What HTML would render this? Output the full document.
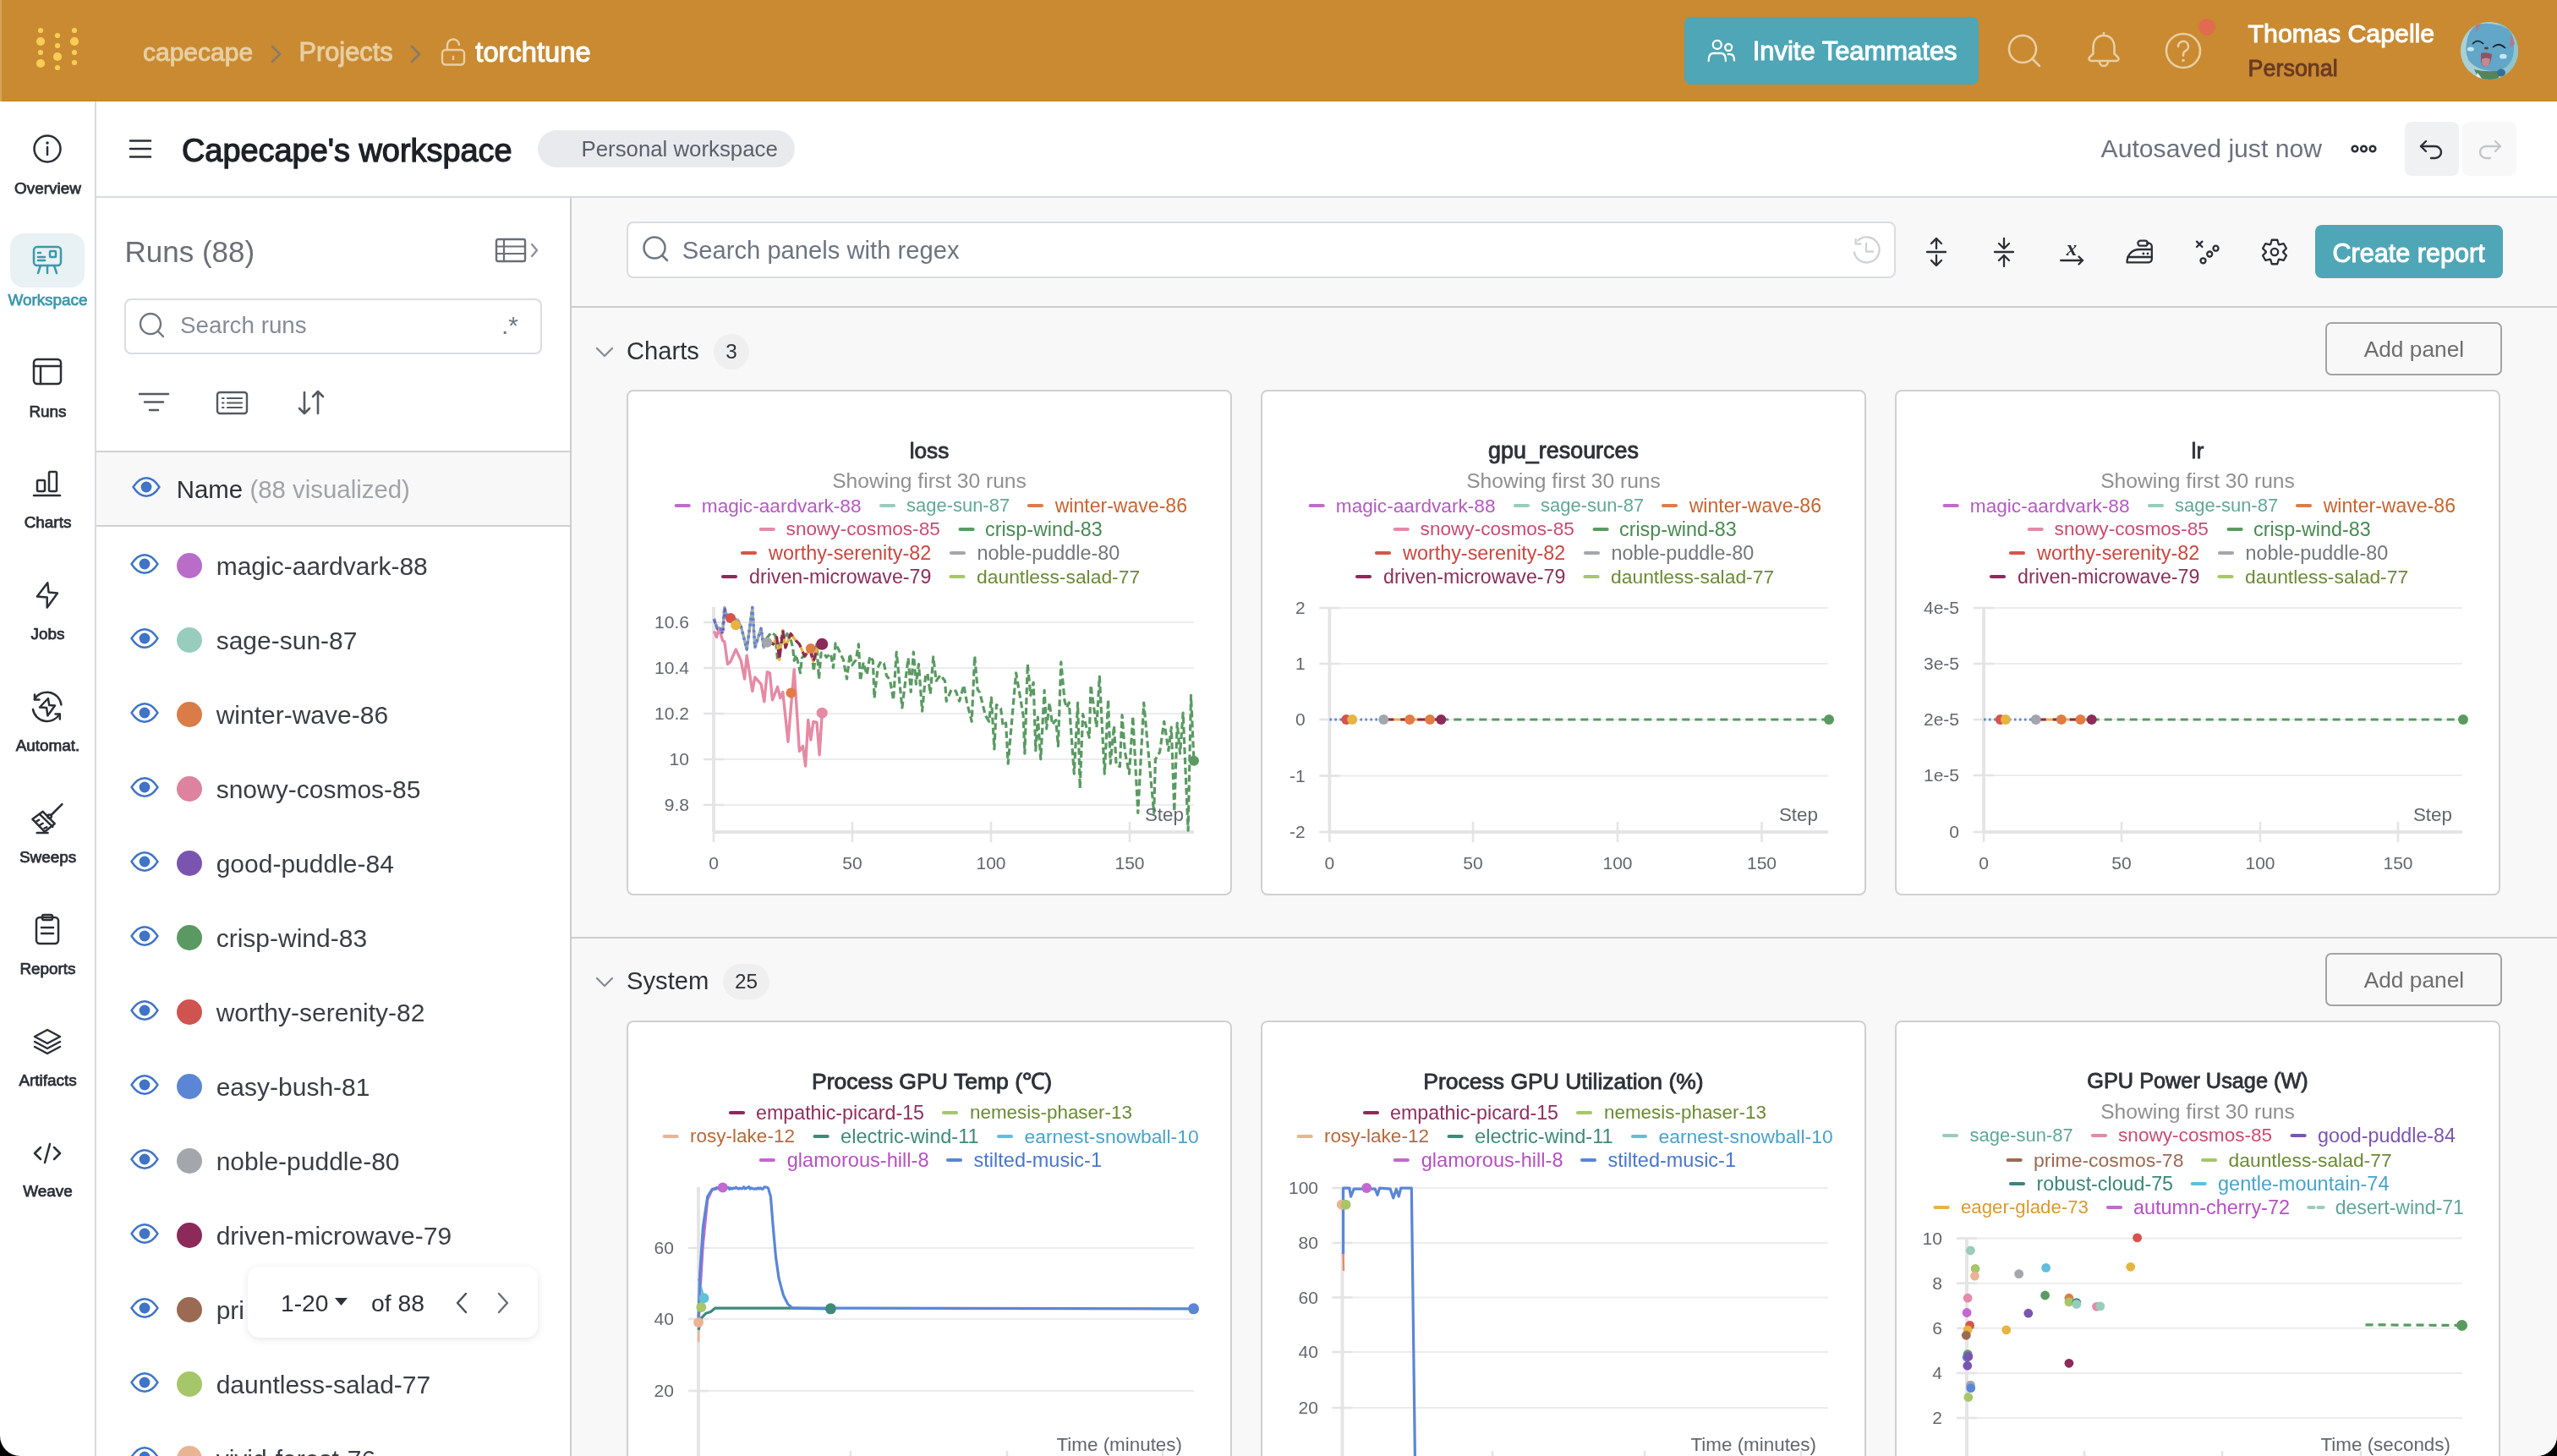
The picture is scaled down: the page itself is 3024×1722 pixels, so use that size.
<!DOCTYPE html><html><head><meta charset="utf-8"><style>
html,body{margin:0;padding:0;background:#000;overflow:hidden;}
#app{will-change:transform;position:relative;width:3024px;height:1722px;overflow:hidden;background:#fff;border-radius:0 0 24px 24px;font-family:"Liberation Sans", sans-serif;}
.t{position:absolute;white-space:nowrap;line-height:1;}
.b{position:absolute;box-sizing:border-box;}
</style></head><body><div id="app">
<div class="b" style="left:0px;top:0px;width:3024px;height:120px;background:#c98a32;"></div>
<div class="b" style="left:0px;top:118.5px;width:3024px;height:1.5px;background:#c47f26;"></div>
<div class="b" style="left:0px;top:0px;width:2px;height:120px;background:#d5a35e;"></div>
<svg class="b" style="left:0px;top:0px;" width="130" height="120" viewBox="0 0 130 120"><circle cx="48" cy="36" r="3.1" fill="#f7cd55"/><circle cx="48" cy="49" r="5.1" fill="#f7cd55"/><circle cx="48" cy="62" r="3.1" fill="#f7cd55"/><circle cx="48" cy="75" r="5.1" fill="#f7cd55"/><circle cx="68" cy="42" r="3.1" fill="#f7cd55"/><circle cx="68" cy="54" r="3.1" fill="#f7cd55"/><circle cx="68" cy="67" r="5.1" fill="#f7cd55"/><circle cx="68" cy="80" r="3.1" fill="#f7cd55"/><circle cx="88" cy="36" r="3.1" fill="#f7cd55"/><circle cx="88" cy="49" r="5.1" fill="#f7cd55"/><circle cx="88" cy="62" r="3.1" fill="#f7cd55"/><circle cx="88" cy="74" r="3.1" fill="#f7cd55"/></svg>
<div class="t" style="left:169.0px;top:47.1px;font-size:30.00px;color:#e8cfa2;-webkit-text-stroke:0.99px #e8cfa2;">capecape</div>
<div class="t" style="left:353.4px;top:46.7px;font-size:30.80px;color:#e8cfa2;-webkit-text-stroke:1.02px #e8cfa2;">Projects</div>
<div class="t" style="left:562.3px;top:45.6px;font-size:32.70px;color:#ffffff;-webkit-text-stroke:1.08px #ffffff;">torchtune</div>
<svg class="b" style="left:320px;top:53px;" width="14" height="22" viewBox="0 0 14 22"><path d="M2 2 L11 11 L2 20" fill="none" stroke="#8a7a66" stroke-width="2.6" stroke-linecap="round" stroke-linejoin="round"/></svg>
<svg class="b" style="left:485px;top:53px;" width="14" height="22" viewBox="0 0 14 22"><path d="M2 2 L11 11 L2 20" fill="none" stroke="#8a7a66" stroke-width="2.6" stroke-linecap="round" stroke-linejoin="round"/></svg>
<svg class="b" style="left:520px;top:45px;" width="32" height="34" viewBox="0 0 32 34"><rect x="3" y="14" width="26" height="17.5" rx="4" fill="none" stroke="#e8cfa2" stroke-width="2.4"/><path d="M9 14 V9 a7 7 0 0 1 14 -1" fill="none" stroke="#e8cfa2" stroke-width="2.4" stroke-linecap="round"/><path d="M16 21 v5" stroke="#e8cfa2" stroke-width="2.2"/></svg>
<div class="b" style="left:1992px;top:20px;width:348px;height:80px;background:#4ea6b6;border-radius:8px;"></div>
<svg class="b" style="left:2016px;top:42px;" width="40" height="36" viewBox="0 0 40 36"><circle cx="14.8" cy="10.9" r="5" fill="none" stroke="#fff" stroke-width="2.3"/><circle cx="28.2" cy="14" r="4" fill="none" stroke="#fff" stroke-width="2.3"/><path d="M4.7 30 C4.7 23 7 21 10 21 H19.5 C22.5 21 24.9 23 24.9 30" fill="none" stroke="#fff" stroke-width="2.3" stroke-linecap="round"/><path d="M27.5 22.2 H30 C33 22.2 35 24.5 35 29.5" fill="none" stroke="#fff" stroke-width="2.3" stroke-linecap="round"/></svg>
<div class="t" style="left:2072.7px;top:45.7px;font-size:30.95px;color:#ffffff;-webkit-text-stroke:1.02px #ffffff;">Invite Teammates</div>
<svg class="b" style="left:2365px;top:32px;" width="56" height="56" viewBox="0 0 56 56"><circle cx="27" cy="26" r="16" fill="none" stroke="#e9cfa2" stroke-width="2.6"/><path d="M38.5 37.5 L47 46" stroke="#e9cfa2" stroke-width="2.6" stroke-linecap="round"/></svg>
<svg class="b" style="left:2465px;top:35px;" width="46" height="50" viewBox="0 0 46 50"><path d="M23 7 c-8 0 -12.5 6 -12.5 14 v7.5 l-4.2 4.2 c-1.6 1.6 -0.8 4.3 1.5 4.3 h30.4 c2.3 0 3.1 -2.7 1.5 -4.3 l-4.2 -4.2 v-7.5 c0 -8 -4.5 -14 -12.5 -14 Z" fill="none" stroke="#e9cfa2" stroke-width="2.6" stroke-linejoin="round"/><path d="M18 38 a5 5 0 0 0 10 0" fill="none" stroke="#e9cfa2" stroke-width="2.6"/><path d="M23 6 v-2" stroke="#e9cfa2" stroke-width="2.6" stroke-linecap="round"/></svg>
<svg class="b" style="left:2557px;top:35px;" width="50" height="50" viewBox="0 0 50 50"><circle cx="25" cy="25" r="20" fill="none" stroke="#e9cfa2" stroke-width="2.6"/><path d="M19 20 a6 6 0 1 1 8.5 5.3 c-1.8 1 -2.5 2 -2.5 4 v1.5" fill="none" stroke="#e9cfa2" stroke-width="2.6" stroke-linecap="round"/><circle cx="25" cy="36.5" r="1.8" fill="#e9cfa2"/></svg>
<div class="b" style="left:2600px;top:22px;width:20px;height:20px;background:#e06b4e;border-radius:50%;"></div>
<div class="t" style="left:2658.6px;top:25.0px;font-size:30.30px;color:#ffffff;-webkit-text-stroke:1.0px #ffffff;">Thomas Capelle</div>
<div class="t" style="left:2658.6px;top:67.5px;font-size:26.90px;color:#6a3a22;-webkit-text-stroke:0.89px #6a3a22;">Personal</div>
<svg class="b" style="left:2910px;top:26px;" width="68" height="68" viewBox="0 0 68 68"><defs><clipPath id="av"><circle cx="34" cy="34" r="34"/></clipPath></defs><g clip-path="url(#av)"><rect width="68" height="68" fill="#8dbfca"/><path d="M0 0 H68 V68 H0 Z" fill="#a9d0d4"/><path d="M44 0 L68 10 V68 H52 Z" fill="#8ec4cc"/><path d="M-2 50 Q6 62 24 68 H0 Z" fill="#5ea2c6"/><path d="M18 4 Q34 -2 56 8 Q66 18 62 40 Q58 56 40 58 Q20 58 10 46 Q4 36 8 20 Q10 10 18 4 Z" fill="#62a6c8"/><path d="M18 3 L24 2 L19 12 Z" fill="#b07a8a"/><path d="M60 14 L64 26 L58 30 Z" fill="#b07a8a"/><path d="M14 26 Q20 19 27 26" fill="none" stroke="#15222e" stroke-width="1.7"/><path d="M38 30 Q45 23 53 31" fill="none" stroke="#15222e" stroke-width="1.7"/><ellipse cx="30.5" cy="31" rx="2.6" ry="1.4" fill="#5a3a3a"/><ellipse cx="11.8" cy="32" rx="4" ry="2.6" fill="#c4e6f2"/><ellipse cx="50.3" cy="40.7" rx="4.3" ry="2.9" fill="#c4e6f2"/><path d="M24 37 Q30 35 37 38 Q36 50 31 53 Q25 54 24 46 Z" fill="#8a5564"/><path d="M25 44 Q30 41 35 44 Q34 53 30 53 Q25 53 25 46 Z" fill="#c48a92"/><path d="M16 56 Q30 60 48 57 L44 68 H22 Z" fill="#52855a"/><path d="M20 60 L26 68 H17 Z" fill="#e8eef0"/><ellipse cx="48" cy="60" rx="5" ry="4.5" fill="#346f94"/></g></svg>
<div class="b" style="left:112px;top:120px;width:2px;height:1602px;background:#d7dadf;"></div>
<div class="b" style="left:12px;top:276px;width:88px;height:64px;background:#e8f1f3;border-radius:16px;"></div>
<svg class="b" style="left:34px;top:154px;" width="44" height="44" viewBox="0 0 44 44"><circle cx="22" cy="22" r="15.5" fill="none" stroke="#2b2f36" stroke-width="2.5" stroke-linecap="round" stroke-linejoin="round"/><path d="M22 20 v9" fill="none" stroke="#2b2f36" stroke-width="2.5" stroke-linecap="round" stroke-linejoin="round"/><circle cx="22" cy="15" r="1.8" fill="#2b2f36"/></svg>
<svg class="b" style="left:34px;top:286px;" width="44" height="44" viewBox="0 0 44 44"><rect x="6" y="6" width="32" height="22" rx="4" fill="none" stroke="#3c98ab" stroke-width="2.5" stroke-linecap="round" stroke-linejoin="round"/><path d="M11 13 h3 M11 18 h8 M11 22 h8" fill="none" stroke="#3c98ab" stroke-width="2.5" stroke-linecap="round" stroke-linejoin="round"/><rect x="25" y="11" width="7" height="7" rx="1" fill="none" stroke="#3c98ab" stroke-width="2.5" stroke-linecap="round" stroke-linejoin="round"/><path d="M14 28 l-3 9 M22 28 v9 M30 28 l3 9" fill="none" stroke="#3c98ab" stroke-width="2.5" stroke-linecap="round" stroke-linejoin="round"/></svg>
<svg class="b" style="left:34px;top:418px;" width="44" height="44" viewBox="0 0 44 44"><rect x="6" y="7" width="32" height="29" rx="4" fill="none" stroke="#2b2f36" stroke-width="2.5" stroke-linecap="round" stroke-linejoin="round"/><path d="M6 15 h32 M14 15 v21" fill="none" stroke="#2b2f36" stroke-width="2.5" stroke-linecap="round" stroke-linejoin="round"/></svg>
<svg class="b" style="left:34px;top:550px;" width="44" height="44" viewBox="0 0 44 44"><rect x="10" y="18" width="9" height="13" rx="1.5" fill="none" stroke="#2b2f36" stroke-width="2.5" stroke-linecap="round" stroke-linejoin="round"/><rect x="24" y="8" width="9" height="23" rx="1.5" fill="none" stroke="#2b2f36" stroke-width="2.5" stroke-linecap="round" stroke-linejoin="round"/><path d="M6 36 h31" fill="none" stroke="#2b2f36" stroke-width="2.5" stroke-linecap="round" stroke-linejoin="round"/></svg>
<svg class="b" style="left:34px;top:682px;" width="44" height="44" viewBox="0 0 44 44"><path d="M22.3 7.3 L9.9 23.4 L21.7 24.6 L21.7 36.4 L34 19.6 L23.5 18.4 Z" fill="none" stroke="#2b2f36" stroke-width="2.5" stroke-linecap="round" stroke-linejoin="round"/></svg>
<svg class="b" style="left:34px;top:814px;" width="44" height="44" viewBox="0 0 44 44"><path d="M6.8 13.2 A17 17 0 0 1 38.4 19.4" fill="none" stroke="#2b2f36" stroke-width="2.5" stroke-linecap="round" stroke-linejoin="round"/><path d="M7 7.5 V13.5 H12.5" fill="none" stroke="#2b2f36" stroke-width="2.5" stroke-linecap="round" stroke-linejoin="round"/><path d="M36.5 30.5 A17 17 0 0 1 5 25" fill="none" stroke="#2b2f36" stroke-width="2.5" stroke-linecap="round" stroke-linejoin="round"/><path d="M36.8 36.5 V30.5 H31.5" fill="none" stroke="#2b2f36" stroke-width="2.5" stroke-linecap="round" stroke-linejoin="round"/><path d="M22.9 12 L13 22.5 L21.1 23.1 L22.3 32.4 L31 20.6 L24.2 20 Z" fill="none" stroke="#2b2f36" stroke-width="2.5" stroke-linecap="round" stroke-linejoin="round"/></svg>
<svg class="b" style="left:34px;top:946px;" width="44" height="44" viewBox="0 0 44 44"><path d="M39.4 5.1 L26.5 18" fill="none" stroke="#2b2f36" stroke-width="2.5" stroke-linecap="round" stroke-linejoin="round"/><circle cx="24.6" cy="19.6" r="2.2" fill="none" stroke="#2b2f36" stroke-width="2.5" stroke-linecap="round" stroke-linejoin="round"/><path d="M16.7 13.8 L30.7 28.2 L18.8 37.7 L4.4 22.8 Z" fill="none" stroke="#2b2f36" stroke-width="2.5" stroke-linecap="round" stroke-linejoin="round"/><path d="M13 17.1 L28.3 31.9" fill="none" stroke="#2b2f36" stroke-width="2.5" stroke-linecap="round" stroke-linejoin="round"/><path d="M9.3 25.3 l2.9 -1.6 M13.4 29.8 l3.3 -2 M18.4 33.6 l2.9 -1.3 M9.7 38.9 H22.5" fill="none" stroke="#2b2f36" stroke-width="2.5" stroke-linecap="round" stroke-linejoin="round"/></svg>
<svg class="b" style="left:34px;top:1078px;" width="44" height="44" viewBox="0 0 44 44"><rect x="9" y="7" width="26" height="31" rx="4" fill="none" stroke="#2b2f36" stroke-width="2.5" stroke-linecap="round" stroke-linejoin="round"/><rect x="16" y="4" width="12" height="6" rx="2" fill="none" stroke="#2b2f36" stroke-width="2.5" stroke-linecap="round" stroke-linejoin="round"/><path d="M15 19 h14 M15 26 h14" fill="none" stroke="#2b2f36" stroke-width="2.5" stroke-linecap="round" stroke-linejoin="round"/></svg>
<svg class="b" style="left:34px;top:1210px;" width="44" height="44" viewBox="0 0 44 44"><path d="M22 8 L37 16 L22 24 L7 16 Z" fill="none" stroke="#2b2f36" stroke-width="2.5" stroke-linecap="round" stroke-linejoin="round"/><path d="M7 22 L22 30 L37 22" fill="none" stroke="#2b2f36" stroke-width="2.5" stroke-linecap="round" stroke-linejoin="round"/><path d="M7 28 L22 36 L37 28" fill="none" stroke="#2b2f36" stroke-width="2.5" stroke-linecap="round" stroke-linejoin="round"/></svg>
<svg class="b" style="left:34px;top:1342px;" width="44" height="44" viewBox="0 0 44 44"><path d="M14 15 L7 22 L14 29 M30 15 L37 22 L30 29 M25 11 L19 33" fill="none" stroke="#2b2f36" stroke-width="2.5" stroke-linecap="round" stroke-linejoin="round"/></svg>
<div class="t" style="left:17.1px;top:214.0px;font-size:18.90px;color:#2b2f36;-webkit-text-stroke:0.75px #2b2f36;">Overview</div>
<div class="t" style="left:9.4px;top:346.0px;font-size:18.90px;color:#3c98ab;-webkit-text-stroke:0.75px #3c98ab;">Workspace</div>
<div class="t" style="left:34.4px;top:478.0px;font-size:18.90px;color:#2b2f36;-webkit-text-stroke:0.75px #2b2f36;">Runs</div>
<div class="t" style="left:28.7px;top:609.0px;font-size:18.90px;color:#2b2f36;-webkit-text-stroke:0.75px #2b2f36;">Charts</div>
<div class="t" style="left:36.5px;top:741.0px;font-size:18.90px;color:#2b2f36;-webkit-text-stroke:0.75px #2b2f36;">Jobs</div>
<div class="t" style="left:18.7px;top:873.0px;font-size:18.90px;color:#2b2f36;-webkit-text-stroke:0.75px #2b2f36;">Automat.</div>
<div class="t" style="left:22.9px;top:1005.0px;font-size:18.90px;color:#2b2f36;-webkit-text-stroke:0.75px #2b2f36;">Sweeps</div>
<div class="t" style="left:23.4px;top:1137.0px;font-size:18.90px;color:#2b2f36;-webkit-text-stroke:0.75px #2b2f36;">Reports</div>
<div class="t" style="left:22.4px;top:1269.0px;font-size:18.90px;color:#2b2f36;-webkit-text-stroke:0.75px #2b2f36;">Artifacts</div>
<div class="t" style="left:27.3px;top:1400.0px;font-size:18.90px;color:#2b2f36;-webkit-text-stroke:0.75px #2b2f36;">Weave</div>
<div class="b" style="left:114px;top:232px;width:2910px;height:2px;background:#d7dadf;"></div>
<svg class="b" style="left:150px;top:160px;" width="32" height="32" viewBox="0 0 32 32"><path d="M4 6.5 h24 M4 16 h24 M4 25.5 h24" stroke="#2b2f36" stroke-width="2.6" stroke-linecap="round"/></svg>
<div class="t" style="left:215.0px;top:160.2px;font-size:37.90px;color:#1d2126;-webkit-text-stroke:1.25px #1d2126;">Capecape's workspace</div>
<div class="b" style="left:636px;top:154px;width:304px;height:44px;background:#e8eaee;border-radius:22px;"></div>
<div class="t" style="left:687.5px;top:163.5px;font-size:25.80px;color:#5a5f69;">Personal workspace</div>
<div class="t" style="left:2484.6px;top:161.3px;font-size:30.15px;color:#6b717c;">Autosaved just now</div>
<svg class="b" style="left:2776px;top:166px;" width="40" height="20" viewBox="0 0 40 20"><circle cx="9" cy="10" r="3.3" fill="none" stroke="#2b2f36" stroke-width="2.6"/><circle cx="19.5" cy="10" r="3.3" fill="none" stroke="#2b2f36" stroke-width="2.6"/><circle cx="30" cy="10" r="3.3" fill="none" stroke="#2b2f36" stroke-width="2.6"/></svg>
<div class="b" style="left:2844px;top:144px;width:64px;height:64px;background:#f0f1f2;border-radius:8px;"></div>
<div class="b" style="left:2912px;top:144px;width:64px;height:64px;background:#f8f8f9;border-radius:8px;"></div>
<svg class="b" style="left:2856px;top:156px;" width="40" height="40" viewBox="0 0 40 40"><path d="M13 11 L7 17 L13 23" fill="none" stroke="#2b2f36" stroke-width="2.4" stroke-linecap="round" stroke-linejoin="round"/><path d="M7 17 H24 a7 7 0 0 1 0 14 H19" fill="none" stroke="#2b2f36" stroke-width="2.4" stroke-linecap="round"/></svg>
<svg class="b" style="left:2924px;top:156px;" width="40" height="40" viewBox="0 0 40 40"><path d="M27 11 L33 17 L27 23" fill="none" stroke="#c3c6ca" stroke-width="2.4" stroke-linecap="round" stroke-linejoin="round"/><path d="M33 17 H16 a7 7 0 0 0 0 14 H21" fill="none" stroke="#c3c6ca" stroke-width="2.4" stroke-linecap="round"/></svg>
<div class="b" style="left:674px;top:234px;width:2px;height:1488px;background:#cdcdcd;"></div>
<div class="t" style="left:147.5px;top:280.4px;font-size:35.00px;color:#6b6e75;">Runs (88)</div>
<svg class="b" style="left:584px;top:280px;" width="58" height="34" viewBox="0 0 58 34"><rect x="3" y="3" width="34" height="26" rx="2" fill="none" stroke="#6b6e75" stroke-width="2.4"/><path d="M3 11.5 h34 M3 20 h34 M12 3 v26" stroke="#6b6e75" stroke-width="2.2"/><path d="M45 9 l6 7 l-6 7" fill="none" stroke="#8a8d93" stroke-width="2.2" stroke-linecap="round" stroke-linejoin="round"/></svg>
<div class="b" style="left:147px;top:353px;width:494px;height:66px;border:2px solid #d9dce1;border-radius:8px;background:#fff;"></div>
<svg class="b" style="left:160px;top:365px;" width="40" height="40" viewBox="0 0 40 40"><circle cx="18" cy="18" r="12" fill="none" stroke="#6f7782" stroke-width="2.4"/><path d="M27 27 L33 33" stroke="#6f7782" stroke-width="2.4" stroke-linecap="round"/></svg>
<div class="t" style="left:213.0px;top:371.0px;font-size:27.75px;color:#858c97;">Search runs</div>
<div class="t" style="left:593.0px;top:369.9px;font-size:30.00px;color:#6f7782;">.*</div>
<svg class="b" style="left:160px;top:455px;" width="44" height="44" viewBox="0 0 44 44"><path d="M5 11 h34 M11 20.5 h22 M17 30 h10" stroke="#555a61" stroke-width="2.6" stroke-linecap="round"/></svg>
<svg class="b" style="left:253px;top:455px;" width="44" height="44" viewBox="0 0 44 44"><rect x="4" y="9" width="35" height="25" rx="3" fill="none" stroke="#555a61" stroke-width="2.4"/><path d="M10 16 h1.5 M10 21.5 h1.5 M10 27 h1.5 M16 16 h17 M16 21.5 h17 M16 27 h17" stroke="#555a61" stroke-width="2.2" stroke-linecap="round"/></svg>
<svg class="b" style="left:345px;top:455px;" width="44" height="44" viewBox="0 0 44 44"><path d="M15 9 V34 M9 28 L15 34 L21 28" fill="none" stroke="#555a61" stroke-width="2.6" stroke-linecap="round" stroke-linejoin="round"/><path d="M31 34 V8 M25 14 L31 8 L37 14" fill="none" stroke="#555a61" stroke-width="2.6" stroke-linecap="round" stroke-linejoin="round"/></svg>
<div class="b" style="left:114px;top:533px;width:560px;height:90px;background:#f8f8f8;border-top:2px solid #d0d0d0;border-bottom:2px solid #d0d0d0;"></div>
<svg class="b" style="left:155.3px;top:563px;" width="36" height="26" viewBox="0 0 36 26"><path d="M2.5 13 C8 4.5 13 2.2 18 2.2 C23 2.2 28 4.5 33.5 13 C28 21.5 23 23.8 18 23.8 C13 23.8 8 21.5 2.5 13 Z" fill="none" stroke="#3f74c6" stroke-width="2.4" stroke-linejoin="round"/><circle cx="18" cy="13" r="6.4" fill="#3f74c6"/></svg>
<div class="t" style="left:208.8px;top:563.5px;font-size:29.40px;color:#2e3238;">Name</div>
<div class="t" style="left:295.4px;top:563.5px;font-size:29.40px;color:#a0a3a8;">(88 visualized)</div>
<svg class="b" style="left:153.4px;top:654.2px;" width="36" height="26" viewBox="0 0 36 26"><path d="M2.5 13 C8 4.5 13 2.2 18 2.2 C23 2.2 28 4.5 33.5 13 C28 21.5 23 23.8 18 23.8 C13 23.8 8 21.5 2.5 13 Z" fill="none" stroke="#3f74c6" stroke-width="2.4" stroke-linejoin="round"/><circle cx="18" cy="13" r="6.4" fill="#3f74c6"/></svg>
<div class="b" style="left:209px;top:654px;width:30px;height:30px;background:#b96cc8;border-radius:50%;"></div>
<div class="t" style="left:255.7px;top:654.9px;font-size:30.00px;color:#3a3e44;">magic-aardvark-88</div>
<svg class="b" style="left:153.4px;top:742.2px;" width="36" height="26" viewBox="0 0 36 26"><path d="M2.5 13 C8 4.5 13 2.2 18 2.2 C23 2.2 28 4.5 33.5 13 C28 21.5 23 23.8 18 23.8 C13 23.8 8 21.5 2.5 13 Z" fill="none" stroke="#3f74c6" stroke-width="2.4" stroke-linejoin="round"/><circle cx="18" cy="13" r="6.4" fill="#3f74c6"/></svg>
<div class="b" style="left:209px;top:742px;width:30px;height:30px;background:#98ccbd;border-radius:50%;"></div>
<div class="t" style="left:255.7px;top:742.9px;font-size:30.00px;color:#3a3e44;">sage-sun-87</div>
<svg class="b" style="left:153.4px;top:830.2px;" width="36" height="26" viewBox="0 0 36 26"><path d="M2.5 13 C8 4.5 13 2.2 18 2.2 C23 2.2 28 4.5 33.5 13 C28 21.5 23 23.8 18 23.8 C13 23.8 8 21.5 2.5 13 Z" fill="none" stroke="#3f74c6" stroke-width="2.4" stroke-linejoin="round"/><circle cx="18" cy="13" r="6.4" fill="#3f74c6"/></svg>
<div class="b" style="left:209px;top:830px;width:30px;height:30px;background:#d97c48;border-radius:50%;"></div>
<div class="t" style="left:255.7px;top:830.9px;font-size:30.00px;color:#3a3e44;">winter-wave-86</div>
<svg class="b" style="left:153.4px;top:918.2px;" width="36" height="26" viewBox="0 0 36 26"><path d="M2.5 13 C8 4.5 13 2.2 18 2.2 C23 2.2 28 4.5 33.5 13 C28 21.5 23 23.8 18 23.8 C13 23.8 8 21.5 2.5 13 Z" fill="none" stroke="#3f74c6" stroke-width="2.4" stroke-linejoin="round"/><circle cx="18" cy="13" r="6.4" fill="#3f74c6"/></svg>
<div class="b" style="left:209px;top:918px;width:30px;height:30px;background:#dd829f;border-radius:50%;"></div>
<div class="t" style="left:255.7px;top:918.9px;font-size:30.00px;color:#3a3e44;">snowy-cosmos-85</div>
<svg class="b" style="left:153.4px;top:1006.2px;" width="36" height="26" viewBox="0 0 36 26"><path d="M2.5 13 C8 4.5 13 2.2 18 2.2 C23 2.2 28 4.5 33.5 13 C28 21.5 23 23.8 18 23.8 C13 23.8 8 21.5 2.5 13 Z" fill="none" stroke="#3f74c6" stroke-width="2.4" stroke-linejoin="round"/><circle cx="18" cy="13" r="6.4" fill="#3f74c6"/></svg>
<div class="b" style="left:209px;top:1006px;width:30px;height:30px;background:#7a55b0;border-radius:50%;"></div>
<div class="t" style="left:255.7px;top:1006.9px;font-size:30.00px;color:#3a3e44;">good-puddle-84</div>
<svg class="b" style="left:153.4px;top:1094.2px;" width="36" height="26" viewBox="0 0 36 26"><path d="M2.5 13 C8 4.5 13 2.2 18 2.2 C23 2.2 28 4.5 33.5 13 C28 21.5 23 23.8 18 23.8 C13 23.8 8 21.5 2.5 13 Z" fill="none" stroke="#3f74c6" stroke-width="2.4" stroke-linejoin="round"/><circle cx="18" cy="13" r="6.4" fill="#3f74c6"/></svg>
<div class="b" style="left:209px;top:1094px;width:30px;height:30px;background:#5a9a62;border-radius:50%;"></div>
<div class="t" style="left:255.7px;top:1094.9px;font-size:30.00px;color:#3a3e44;">crisp-wind-83</div>
<svg class="b" style="left:153.4px;top:1182.2px;" width="36" height="26" viewBox="0 0 36 26"><path d="M2.5 13 C8 4.5 13 2.2 18 2.2 C23 2.2 28 4.5 33.5 13 C28 21.5 23 23.8 18 23.8 C13 23.8 8 21.5 2.5 13 Z" fill="none" stroke="#3f74c6" stroke-width="2.4" stroke-linejoin="round"/><circle cx="18" cy="13" r="6.4" fill="#3f74c6"/></svg>
<div class="b" style="left:209px;top:1182px;width:30px;height:30px;background:#cf5450;border-radius:50%;"></div>
<div class="t" style="left:255.7px;top:1182.9px;font-size:30.00px;color:#3a3e44;">worthy-serenity-82</div>
<svg class="b" style="left:153.4px;top:1270.2px;" width="36" height="26" viewBox="0 0 36 26"><path d="M2.5 13 C8 4.5 13 2.2 18 2.2 C23 2.2 28 4.5 33.5 13 C28 21.5 23 23.8 18 23.8 C13 23.8 8 21.5 2.5 13 Z" fill="none" stroke="#3f74c6" stroke-width="2.4" stroke-linejoin="round"/><circle cx="18" cy="13" r="6.4" fill="#3f74c6"/></svg>
<div class="b" style="left:209px;top:1270px;width:30px;height:30px;background:#5b86d6;border-radius:50%;"></div>
<div class="t" style="left:255.7px;top:1270.9px;font-size:30.00px;color:#3a3e44;">easy-bush-81</div>
<svg class="b" style="left:153.4px;top:1358.2px;" width="36" height="26" viewBox="0 0 36 26"><path d="M2.5 13 C8 4.5 13 2.2 18 2.2 C23 2.2 28 4.5 33.5 13 C28 21.5 23 23.8 18 23.8 C13 23.8 8 21.5 2.5 13 Z" fill="none" stroke="#3f74c6" stroke-width="2.4" stroke-linejoin="round"/><circle cx="18" cy="13" r="6.4" fill="#3f74c6"/></svg>
<div class="b" style="left:209px;top:1358px;width:30px;height:30px;background:#a3a7ab;border-radius:50%;"></div>
<div class="t" style="left:255.7px;top:1358.9px;font-size:30.00px;color:#3a3e44;">noble-puddle-80</div>
<svg class="b" style="left:153.4px;top:1446.2px;" width="36" height="26" viewBox="0 0 36 26"><path d="M2.5 13 C8 4.5 13 2.2 18 2.2 C23 2.2 28 4.5 33.5 13 C28 21.5 23 23.8 18 23.8 C13 23.8 8 21.5 2.5 13 Z" fill="none" stroke="#3f74c6" stroke-width="2.4" stroke-linejoin="round"/><circle cx="18" cy="13" r="6.4" fill="#3f74c6"/></svg>
<div class="b" style="left:209px;top:1446px;width:30px;height:30px;background:#8c2a5a;border-radius:50%;"></div>
<div class="t" style="left:255.7px;top:1446.9px;font-size:30.00px;color:#3a3e44;">driven-microwave-79</div>
<svg class="b" style="left:153.4px;top:1534.2px;" width="36" height="26" viewBox="0 0 36 26"><path d="M2.5 13 C8 4.5 13 2.2 18 2.2 C23 2.2 28 4.5 33.5 13 C28 21.5 23 23.8 18 23.8 C13 23.8 8 21.5 2.5 13 Z" fill="none" stroke="#3f74c6" stroke-width="2.4" stroke-linejoin="round"/><circle cx="18" cy="13" r="6.4" fill="#3f74c6"/></svg>
<div class="b" style="left:209px;top:1534px;width:30px;height:30px;background:#9a6a52;border-radius:50%;"></div>
<div class="t" style="left:255.7px;top:1534.9px;font-size:30.00px;color:#3a3e44;">pri</div>
<svg class="b" style="left:153.4px;top:1622.2px;" width="36" height="26" viewBox="0 0 36 26"><path d="M2.5 13 C8 4.5 13 2.2 18 2.2 C23 2.2 28 4.5 33.5 13 C28 21.5 23 23.8 18 23.8 C13 23.8 8 21.5 2.5 13 Z" fill="none" stroke="#3f74c6" stroke-width="2.4" stroke-linejoin="round"/><circle cx="18" cy="13" r="6.4" fill="#3f74c6"/></svg>
<div class="b" style="left:209px;top:1622px;width:30px;height:30px;background:#a6c66a;border-radius:50%;"></div>
<div class="t" style="left:255.7px;top:1622.9px;font-size:30.00px;color:#3a3e44;">dauntless-salad-77</div>
<svg class="b" style="left:153.4px;top:1710.2px;" width="36" height="26" viewBox="0 0 36 26"><path d="M2.5 13 C8 4.5 13 2.2 18 2.2 C23 2.2 28 4.5 33.5 13 C28 21.5 23 23.8 18 23.8 C13 23.8 8 21.5 2.5 13 Z" fill="none" stroke="#3f74c6" stroke-width="2.4" stroke-linejoin="round"/><circle cx="18" cy="13" r="6.4" fill="#3f74c6"/></svg>
<div class="b" style="left:209px;top:1710px;width:30px;height:30px;background:#e7b594;border-radius:50%;"></div>
<div class="t" style="left:255.7px;top:1710.9px;font-size:30.00px;color:#3a3e44;">vivid-forest-76</div>
<div class="b" style="left:293px;top:1498px;width:343px;height:84px;background:#fff;border-radius:14px;box-shadow:0 2px 10px rgba(0,0,0,0.10);"></div>
<div class="t" style="left:332.0px;top:1526.8px;font-size:28.20px;color:#2e3238;">1-20</div>
<svg class="b" style="left:394px;top:1532px;" width="20" height="16" viewBox="0 0 20 16"><path d="M2 3 H17 L9.5 12 Z" fill="#2e3238"/></svg>
<div class="t" style="left:439.0px;top:1526.8px;font-size:28.30px;color:#2e3238;">of 88</div>
<svg class="b" style="left:534px;top:1526px;" width="24" height="30" viewBox="0 0 24 30"><path d="M17 4 L7 15 L17 26" fill="none" stroke="#4a4e55" stroke-width="2.4" stroke-linecap="round" stroke-linejoin="round"/></svg>
<svg class="b" style="left:583px;top:1526px;" width="24" height="30" viewBox="0 0 24 30"><path d="M7 4 L17 15 L7 26" fill="none" stroke="#6b6e75" stroke-width="2.4" stroke-linecap="round" stroke-linejoin="round"/></svg>
<div class="b" style="left:676px;top:234px;width:2348px;height:1488px;background:#f8f8f8;"></div>
<div class="b" style="left:676px;top:362px;width:2348px;height:2px;background:#cdcdcd;"></div>
<div class="b" style="left:741px;top:262px;width:1501px;height:67px;background:#fff;border:2px solid #d9dce1;border-radius:8px;"></div>
<svg class="b" style="left:755px;top:274px;" width="40" height="40" viewBox="0 0 40 40"><circle cx="19" cy="19" r="12.5" fill="none" stroke="#6f7782" stroke-width="2.5"/><path d="M28 28 L34 34" stroke="#6f7782" stroke-width="2.5" stroke-linecap="round"/></svg>
<div class="t" style="left:806.8px;top:281.8px;font-size:29.20px;color:#6d7480;">Search panels with regex</div>
<svg class="b" style="left:2188px;top:276px;" width="40" height="40" viewBox="0 0 40 40"><path d="M4.9 22.4 A15 15 0 1 0 9.2 8.6" fill="none" stroke="#cfd2d6" stroke-width="2.3" stroke-linecap="round"/><path d="M6.6 6.9 V12.5 H12.6" fill="none" stroke="#cfd2d6" stroke-width="2.3" stroke-linecap="round" stroke-linejoin="round"/><path d="M19 12 V21.5 H26.9" fill="none" stroke="#cfd2d6" stroke-width="2.3" stroke-linecap="round"/></svg>
<svg class="b" style="left:2270px;top:278px;" width="40" height="40" viewBox="0 0 40 40"><path d="M9 20 h22 M20 4 v12 M14 10 L20 4 L26 10 M20 24 v12 M14 30 L20 36 L26 30" fill="none" stroke="#2b2f36" stroke-width="2.3" stroke-linecap="round" stroke-linejoin="round"/></svg>
<svg class="b" style="left:2350px;top:278px;" width="40" height="40" viewBox="0 0 40 40"><path d="M9 20 h22 M20 4 v12 M14 10 L20 16 L26 10 M20 24 v13 M14 30 L20 24 L26 30" fill="none" stroke="#2b2f36" stroke-width="2.3" stroke-linecap="round" stroke-linejoin="round"/></svg>
<svg class="b" style="left:2430px;top:278px;" width="40" height="40" viewBox="0 0 40 40"><path d="M7.2 30 h26 M28.5 25.5 L33 30 L28.5 34.5" fill="none" stroke="#2b2f36" stroke-width="2.3" stroke-linecap="round" stroke-linejoin="round"/><text x="20" y="23.5" font-family="Liberation Serif" font-style="italic" font-weight="700" font-size="25" text-anchor="middle" fill="#2b2f36">x</text></svg>
<svg class="b" style="left:2510px;top:278px;" width="40" height="40" viewBox="0 0 40 40"><rect x="18.4" y="6.6" width="11.6" height="6.1" rx="3" fill="none" stroke="#2b2f36" stroke-width="2.3" stroke-linecap="round" stroke-linejoin="round"/><path d="M29 9.6 h2 a3.8 3.8 0 0 1 3.8 3.8 V28.6 a3.8 3.8 0 0 1 -3.8 3.8 H5.5 C5.5 24 11 17 20 17 H34.8" fill="none" stroke="#2b2f36" stroke-width="2.3" stroke-linecap="round" stroke-linejoin="round"/><path d="M6.5 26 H34.8" fill="none" stroke="#2b2f36" stroke-width="2.3" stroke-linecap="round" stroke-linejoin="round"/><circle cx="24.9" cy="22" r="1.4" fill="#2b2f36"/><circle cx="30" cy="22" r="1.4" fill="#2b2f36"/></svg>
<svg class="b" style="left:2590px;top:278px;" width="40" height="40" viewBox="0 0 40 40"><path d="M8 7.6 l6.4 6.4 M14.4 7.6 l-6.4 6.4" fill="none" stroke="#2b2f36" stroke-width="2.3" stroke-linecap="round" stroke-linejoin="round"/><circle cx="15.5" cy="30.3" r="3" fill="none" stroke="#2b2f36" stroke-width="2.3" stroke-linecap="round" stroke-linejoin="round"/><circle cx="23.2" cy="22.5" r="3" fill="none" stroke="#2b2f36" stroke-width="2.3" stroke-linecap="round" stroke-linejoin="round"/><circle cx="30.5" cy="15.7" r="3" fill="none" stroke="#2b2f36" stroke-width="2.3" stroke-linecap="round" stroke-linejoin="round"/></svg>
<svg class="b" style="left:2670px;top:278px;" width="40" height="40" viewBox="0 0 40 40"><polygon points="15.21,10.99 16.72,5.77 23.28,5.77 24.79,10.99 25.41,11.35 30.68,10.04 33.96,15.73 30.19,19.64 30.19,20.36 33.96,24.27 30.68,29.96 25.41,28.65 24.79,29.01 23.28,34.23 16.72,34.23 15.21,29.01 14.59,28.65 9.32,29.96 6.04,24.27 9.81,20.36 9.81,19.64 6.04,15.73 9.32,10.04 14.59,11.35" fill="none" stroke="#2b2f36" stroke-width="2.3" stroke-linecap="round" stroke-linejoin="round"/><circle cx="20" cy="20" r="4.2" fill="none" stroke="#2b2f36" stroke-width="2.3" stroke-linecap="round" stroke-linejoin="round"/></svg>
<div class="b" style="left:2738px;top:266px;width:222px;height:63px;background:#4ea6b6;border-radius:8px;"></div>
<div class="t" style="left:2758.5px;top:283.6px;font-size:30.60px;color:#ffffff;-webkit-text-stroke:1.01px #ffffff;">Create report</div>
<svg class="b" style="left:700px;top:402px;" width="30" height="28" viewBox="0 0 30 28"><path d="M6 10 L15 19 L24 10" fill="none" stroke="#8a8e94" stroke-width="2.4" stroke-linecap="round" stroke-linejoin="round"/></svg>
<div class="t" style="left:741.0px;top:401.3px;font-size:29.20px;color:#2e3238;">Charts</div>
<div class="b" style="left:844px;top:395px;width:42px;height:42px;background:#efefef;border-radius:21px;"></div>
<div class="t" style="left:858.2px;top:403.8px;font-size:24.30px;color:#2e3238;">3</div>
<div class="b" style="left:2750px;top:381px;width:209px;height:63px;border:2px solid #a3a3a3;border-radius:7px;"></div>
<div class="t" style="left:2795.7px;top:399.8px;font-size:26.30px;color:#6e6e6e;">Add panel</div>
<div class="b" style="left:676px;top:1108px;width:2348px;height:2px;background:#cdcdcd;"></div>
<svg class="b" style="left:700px;top:1147px;" width="30" height="28" viewBox="0 0 30 28"><path d="M6 10 L15 19 L24 10" fill="none" stroke="#8a8e94" stroke-width="2.4" stroke-linecap="round" stroke-linejoin="round"/></svg>
<div class="t" style="left:741.0px;top:1146.3px;font-size:29.20px;color:#2e3238;">System</div>
<div class="b" style="left:855px;top:1140px;width:55px;height:42px;background:#efefef;border-radius:21px;"></div>
<div class="t" style="left:869.0px;top:1148.8px;font-size:24.30px;color:#2e3238;">25</div>
<div class="b" style="left:2750px;top:1127px;width:209px;height:63px;border:2px solid #a3a3a3;border-radius:7px;"></div>
<div class="t" style="left:2795.7px;top:1145.8px;font-size:26.30px;color:#6e6e6e;">Add panel</div>
<div class="b" style="left:741px;top:461px;width:716px;height:598px;background:#fff;border:2px solid #d0d0d0;border-radius:8px;"></div>
<div class="b" style="left:741px;top:1207px;width:716px;height:560px;background:#fff;border:2px solid #d0d0d0;border-radius:8px;"></div>
<div class="b" style="left:1491px;top:461px;width:716px;height:598px;background:#fff;border:2px solid #d0d0d0;border-radius:8px;"></div>
<div class="b" style="left:1491px;top:1207px;width:716px;height:560px;background:#fff;border:2px solid #d0d0d0;border-radius:8px;"></div>
<div class="b" style="left:2241px;top:461px;width:716px;height:598px;background:#fff;border:2px solid #d0d0d0;border-radius:8px;"></div>
<div class="b" style="left:2241px;top:1207px;width:716px;height:560px;background:#fff;border:2px solid #d0d0d0;border-radius:8px;"></div>
<svg class="b" style="left:740px;top:588px;" width="2300" height="20" viewBox="740 588 2300 20"><path d="M799.7 598 h15" stroke="#c06ccc" stroke-width="4.2" stroke-linecap="round"/><path d="M1042.0 598 h15" stroke="#98ccbd" stroke-width="4.2" stroke-linecap="round"/><path d="M1217.0 598 h15" stroke="#e07c45" stroke-width="4.2" stroke-linecap="round"/></svg>
<div class="t" style="left:829.8px;top:587.1px;font-size:22.65px;color:#b35ac0;">magic-aardvark-88</div>
<div class="t" style="left:1072.0px;top:587.4px;font-size:21.98px;color:#62a894;">sage-sun-87</div>
<div class="t" style="left:1247.7px;top:586.9px;font-size:23.05px;color:#c8642e;">winter-wave-86</div>
<svg class="b" style="left:740px;top:616px;" width="2300" height="20" viewBox="740 616 2300 20"><path d="M899.8 626 h15" stroke="#e58aa5" stroke-width="4.2" stroke-linecap="round"/><path d="M1135.6 626 h15" stroke="#5a9a62" stroke-width="4.2" stroke-linecap="round"/></svg>
<div class="t" style="left:929.6px;top:615.1px;font-size:22.62px;color:#c94d72;">snowy-cosmos-85</div>
<div class="t" style="left:1165.0px;top:614.8px;font-size:23.34px;color:#468a50;">crisp-wind-83</div>
<svg class="b" style="left:740px;top:644px;" width="2300" height="20" viewBox="740 644 2300 20"><path d="M878.0 654 h15" stroke="#d5544d" stroke-width="4.2" stroke-linecap="round"/><path d="M1125.0 654 h15" stroke="#a3a7ab" stroke-width="4.2" stroke-linecap="round"/></svg>
<div class="t" style="left:909.0px;top:642.7px;font-size:23.39px;color:#c94840;">worthy-serenity-82</div>
<div class="t" style="left:1155.4px;top:642.7px;font-size:23.38px;color:#72777c;">noble-puddle-80</div>
<svg class="b" style="left:740px;top:672px;" width="2300" height="20" viewBox="740 672 2300 20"><path d="M855.0 682 h15" stroke="#8c2a5a" stroke-width="4.2" stroke-linecap="round"/><path d="M1124.5 682 h15" stroke="#a6c66a" stroke-width="4.2" stroke-linecap="round"/></svg>
<div class="t" style="left:886.0px;top:670.8px;font-size:23.21px;color:#8a2f5c;">driven-microwave-79</div>
<div class="t" style="left:1155.0px;top:671.0px;font-size:22.87px;color:#6b8a35;">dauntless-salad-77</div>
<svg class="b" style="left:740px;top:588px;" width="2300" height="20" viewBox="740 588 2300 20"><path d="M1549.7 598 h15" stroke="#c06ccc" stroke-width="4.2" stroke-linecap="round"/><path d="M1792.0 598 h15" stroke="#98ccbd" stroke-width="4.2" stroke-linecap="round"/><path d="M1967.0 598 h15" stroke="#e07c45" stroke-width="4.2" stroke-linecap="round"/></svg>
<div class="t" style="left:1579.8px;top:587.1px;font-size:22.65px;color:#b35ac0;">magic-aardvark-88</div>
<div class="t" style="left:1822.0px;top:587.4px;font-size:21.98px;color:#62a894;">sage-sun-87</div>
<div class="t" style="left:1997.7px;top:586.9px;font-size:23.05px;color:#c8642e;">winter-wave-86</div>
<svg class="b" style="left:740px;top:616px;" width="2300" height="20" viewBox="740 616 2300 20"><path d="M1649.8 626 h15" stroke="#e58aa5" stroke-width="4.2" stroke-linecap="round"/><path d="M1885.6 626 h15" stroke="#5a9a62" stroke-width="4.2" stroke-linecap="round"/></svg>
<div class="t" style="left:1679.6px;top:615.1px;font-size:22.62px;color:#c94d72;">snowy-cosmos-85</div>
<div class="t" style="left:1915.0px;top:614.8px;font-size:23.34px;color:#468a50;">crisp-wind-83</div>
<svg class="b" style="left:740px;top:644px;" width="2300" height="20" viewBox="740 644 2300 20"><path d="M1628.0 654 h15" stroke="#d5544d" stroke-width="4.2" stroke-linecap="round"/><path d="M1875.0 654 h15" stroke="#a3a7ab" stroke-width="4.2" stroke-linecap="round"/></svg>
<div class="t" style="left:1659.0px;top:642.7px;font-size:23.39px;color:#c94840;">worthy-serenity-82</div>
<div class="t" style="left:1905.4px;top:642.7px;font-size:23.38px;color:#72777c;">noble-puddle-80</div>
<svg class="b" style="left:740px;top:672px;" width="2300" height="20" viewBox="740 672 2300 20"><path d="M1605.0 682 h15" stroke="#8c2a5a" stroke-width="4.2" stroke-linecap="round"/><path d="M1874.5 682 h15" stroke="#a6c66a" stroke-width="4.2" stroke-linecap="round"/></svg>
<div class="t" style="left:1636.0px;top:670.8px;font-size:23.21px;color:#8a2f5c;">driven-microwave-79</div>
<div class="t" style="left:1905.0px;top:671.0px;font-size:22.87px;color:#6b8a35;">dauntless-salad-77</div>
<svg class="b" style="left:740px;top:588px;" width="2300" height="20" viewBox="740 588 2300 20"><path d="M2299.7 598 h15" stroke="#c06ccc" stroke-width="4.2" stroke-linecap="round"/><path d="M2542.0 598 h15" stroke="#98ccbd" stroke-width="4.2" stroke-linecap="round"/><path d="M2717.0 598 h15" stroke="#e07c45" stroke-width="4.2" stroke-linecap="round"/></svg>
<div class="t" style="left:2329.8px;top:587.1px;font-size:22.65px;color:#b35ac0;">magic-aardvark-88</div>
<div class="t" style="left:2572.0px;top:587.4px;font-size:21.98px;color:#62a894;">sage-sun-87</div>
<div class="t" style="left:2747.7px;top:586.9px;font-size:23.05px;color:#c8642e;">winter-wave-86</div>
<svg class="b" style="left:740px;top:616px;" width="2300" height="20" viewBox="740 616 2300 20"><path d="M2399.8 626 h15" stroke="#e58aa5" stroke-width="4.2" stroke-linecap="round"/><path d="M2635.6 626 h15" stroke="#5a9a62" stroke-width="4.2" stroke-linecap="round"/></svg>
<div class="t" style="left:2429.6px;top:615.1px;font-size:22.62px;color:#c94d72;">snowy-cosmos-85</div>
<div class="t" style="left:2665.0px;top:614.8px;font-size:23.34px;color:#468a50;">crisp-wind-83</div>
<svg class="b" style="left:740px;top:644px;" width="2300" height="20" viewBox="740 644 2300 20"><path d="M2378.0 654 h15" stroke="#d5544d" stroke-width="4.2" stroke-linecap="round"/><path d="M2625.0 654 h15" stroke="#a3a7ab" stroke-width="4.2" stroke-linecap="round"/></svg>
<div class="t" style="left:2409.0px;top:642.7px;font-size:23.39px;color:#c94840;">worthy-serenity-82</div>
<div class="t" style="left:2655.4px;top:642.7px;font-size:23.38px;color:#72777c;">noble-puddle-80</div>
<svg class="b" style="left:740px;top:672px;" width="2300" height="20" viewBox="740 672 2300 20"><path d="M2355.0 682 h15" stroke="#8c2a5a" stroke-width="4.2" stroke-linecap="round"/><path d="M2624.5 682 h15" stroke="#a6c66a" stroke-width="4.2" stroke-linecap="round"/></svg>
<div class="t" style="left:2386.0px;top:670.8px;font-size:23.21px;color:#8a2f5c;">driven-microwave-79</div>
<div class="t" style="left:2655.0px;top:671.0px;font-size:22.87px;color:#6b8a35;">dauntless-salad-77</div>
<div class="t" style="left:1075.7px;top:519.8px;font-size:26.20px;color:#2e3238;-webkit-text-stroke:0.86px #2e3238;">loss</div>
<div class="t" style="left:1760.0px;top:519.5px;font-size:26.90px;color:#2e3238;-webkit-text-stroke:0.89px #2e3238;">gpu_resources</div>
<div class="t" style="left:2591.6px;top:519.7px;font-size:26.50px;color:#2e3238;-webkit-text-stroke:0.87px #2e3238;">lr</div>
<div class="t" style="left:984.2px;top:557.1px;font-size:24.60px;color:#8f8f8f;">Showing first 30 runs</div>
<div class="t" style="left:1734.2px;top:557.1px;font-size:24.60px;color:#8f8f8f;">Showing first 30 runs</div>
<div class="t" style="left:2484.2px;top:557.1px;font-size:24.60px;color:#8f8f8f;">Showing first 30 runs</div>
<svg class="b" style="left:741px;top:461px;" width="716" height="598" viewBox="741 461 716 598"><path d="M832 736 H1412" stroke="#ececee" stroke-width="2"/><path d="M832 736 H856" stroke="#e4e4e7" stroke-width="2.6"/><path d="M832 790 H1412" stroke="#ececee" stroke-width="2"/><path d="M832 790 H856" stroke="#e4e4e7" stroke-width="2.6"/><path d="M832 844 H1412" stroke="#ececee" stroke-width="2"/><path d="M832 844 H856" stroke="#e4e4e7" stroke-width="2.6"/><path d="M832 898 H1412" stroke="#ececee" stroke-width="2"/><path d="M832 898 H856" stroke="#e4e4e7" stroke-width="2.6"/><path d="M832 952 H1412" stroke="#ececee" stroke-width="2"/><path d="M832 952 H856" stroke="#e4e4e7" stroke-width="2.6"/><path d="M844 718 V984" stroke="#e4e4e7" stroke-width="3.8"/><path d="M844 984 H1412" stroke="#e4e4e7" stroke-width="4"/><path d="M1008 972 V996" stroke="#e4e4e7" stroke-width="2.6"/><path d="M1172 972 V996" stroke="#e4e4e7" stroke-width="2.6"/><path d="M1336 972 V996" stroke="#e4e4e7" stroke-width="2.6"/><path d="M844 984 V996" stroke="#e4e4e7" stroke-width="2.6"/><polyline points="906.2,755.6 912.4,747.9 917.0,751.5 919.6,781.4 923.7,754.6 926.8,758.7 930.9,749.5 935.5,757.7 937.6,765.9 939.2,781.4 941.2,774.2 944.3,785.5 946.4,795.8 948.4,778.3 951.5,774.2 955.6,772.1 959.8,765.9 962.3,793.8 965.9,761.8 968.5,803.0 971.1,772.1 974.2,772.1 977.3,777.3 982.4,773.2 985.5,789.6 988.1,760.8 991.7,768.0 997.4,780.4 1001.5,803.0 1005.1,773.2 1007.7,786.6 1012.3,780.4 1015.4,761.8 1017.5,805.1 1021.1,783.5 1025.2,797.9 1028.8,776.2 1032.4,781.4 1034.0,825.7 1038.1,789.6 1041.7,782.4 1045.3,784.5 1048.4,798.9 1052.5,804.1 1056.6,827.8 1060.2,771.1 1066.9,837.0 1074.1,778.3 1077.2,818.5 1080.3,771.1 1083.4,809.2 1086.5,785.5 1090.6,841.2 1094.7,797.9 1096.9,796.7 1100.3,820.7 1103.7,776.9 1107.2,805.2 1112.3,798.4 1117.5,805.2 1119.2,829.3 1125.2,815.5 1130.4,817.3 1134.6,829.3 1139.8,810.4 1143.2,829.3 1149.2,853.3 1152.7,776.1 1156.1,815.5 1158.7,819.0 1165.5,846.5 1169.8,853.3 1172.4,825.0 1175.9,885.9 1178.4,833.6 1183.6,837.9 1186.2,858.5 1189.6,855.0 1192.2,903.1 1201.6,795.8 1210.2,846.5 1211.9,891.1 1215.3,785.5 1218.8,822.4 1222.2,807.0 1224.8,887.7 1227.4,848.2 1230.8,898.0 1235.1,816.4 1237.7,861.9 1241.1,831.0 1244.5,856.8 1248.8,851.6 1251.4,882.5 1254.8,782.9 1259.1,829.3 1261.7,837.0 1264.3,831.0 1270.3,915.1 1274.6,831.0 1277.2,932.3 1280.6,844.7 1288.3,872.2 1290.0,810.4 1296.9,860.2 1300.3,800.1 1306.3,915.1 1310.6,827.6 1313.2,903.1 1317.5,858.5 1320.1,904.8 1324.4,906.6 1327.0,845.6 1330.4,889.4 1335.5,915.1 1339.8,847.3 1345.8,961.5 1352.7,831.0 1364.7,961.5 1366.4,898.0 1371.6,889.4 1376.7,853.3 1381.9,887.7 1385.3,860.2 1388.8,959.8 1392.2,855.0 1395.6,891.1 1399.1,843.0 1405.1,982.1 1408.5,822.4 1411.9,899.7" fill="none" stroke="#5a9a62" stroke-width="3.2" stroke-linejoin="round" stroke-dasharray="8 4" /><polyline points="844.4,746.4 847.5,753.6 849.6,744.3 851.6,747.4 854.7,757.7 856.8,758.7 860.5,785.5 864.0,782.4 870.2,768.0 876.4,781.4 880.5,803.0 883.2,775.2 889.8,817.5 892.8,801.0 900.1,809.2 903.8,829.8 907.3,794.8 910.4,795.8 913.5,827.8 919.6,812.3 922.7,825.7 925.8,818.5 932.0,877.2 939.2,791.7 945.4,888.5 949.5,882.4 952.6,906.1 955.7,851.5 958.8,875.1 961.9,853.5 966.0,854.5 969.1,892.7 972.2,844.2" fill="none" stroke="#e58aa5" stroke-width="3.4" stroke-linejoin="round" /><polyline points="844.4,731.9 847.5,741.2 851.6,743.3 854.7,747.4 856.8,718.5 860.9,733.0 866.1,730.9 872.2,733.0 876.4,741.2 883.2,768.0 889.8,718.5 892.8,765.9 900.1,743.3 903.2,765.9 907.3,756.7" fill="none" stroke="#a3a7ab" stroke-width="3.4" stroke-linejoin="round" /><polyline points="844.4,731.9 847.5,741.2 851.6,743.3 854.7,747.4 856.8,718.5 860.9,733.0 866.1,730.9 872.2,733.0 876.4,741.2 883.2,768.0 889.8,718.5 892.8,765.9 900.1,743.3 903.2,765.9 907.3,756.7" fill="none" stroke="#5b86d6" stroke-width="3.4" stroke-linejoin="round" stroke-dasharray="3 4" /><polyline points="844.8,734.4 847.9,743.7 852.0,745.7 855.1,749.9 857.2,721.0 861.3,735.4 866.5,733.4 872.7,735.4 876.8,743.7" fill="none" stroke="#7a55b0" stroke-width="2.6" stroke-linejoin="round" stroke-dasharray="3 5" /><polyline points="907.3,757.7 914.5,761.8 918.6,753.6 921.7,780.4 925.8,745.3 928.9,765.9 935.1,749.5 941.3,757.7 945.4,761.8 951.6,776.2 957.8,768.0 961.9,782.4 966.0,768.0 972.2,761.8" fill="none" stroke="#e6b440" stroke-width="3.2" stroke-linejoin="round" /><polyline points="907.3,757.7 914.5,761.8 918.6,753.6 921.7,780.4 925.8,745.3 928.9,765.9 935.1,749.5 941.3,757.7 945.4,761.8 951.6,776.2 957.8,768.0 961.9,782.4 966.0,768.0 972.2,761.8" fill="none" stroke="#8c2a5a" stroke-width="3.2" stroke-linejoin="round" stroke-dasharray="10 6" /><circle cx="864.0" cy="730.9" r="6" fill="#d5544d"/><circle cx="870.2" cy="739.2" r="6" fill="#e6b440"/><circle cx="907.3" cy="759.8" r="6" fill="#a3a7ab"/><circle cx="935.5" cy="819.5" r="6" fill="#e07c45"/><circle cx="958.8" cy="767.0" r="6" fill="#e07c45"/><circle cx="972.2" cy="761.8" r="7" fill="#8c2a5a"/><circle cx="972.2" cy="843.2" r="6.5" fill="#e58aa5"/><circle cx="1412.0" cy="899.7" r="6" fill="#5a9a62"/></svg>
<div class="t" style="left:774.1px;top:725.4px;font-size:21.00px;color:#62666d;">10.6</div>
<div class="t" style="left:774.1px;top:779.4px;font-size:21.00px;color:#62666d;">10.4</div>
<div class="t" style="left:774.1px;top:833.4px;font-size:21.00px;color:#62666d;">10.2</div>
<div class="t" style="left:791.6px;top:887.4px;font-size:21.00px;color:#62666d;">10</div>
<div class="t" style="left:785.8px;top:941.4px;font-size:21.00px;color:#62666d;">9.8</div>
<div class="t" style="left:838.2px;top:1010.4px;font-size:21.00px;color:#62666d;">0</div>
<div class="t" style="left:996.3px;top:1010.4px;font-size:21.00px;color:#62666d;">50</div>
<div class="t" style="left:1154.5px;top:1010.4px;font-size:21.00px;color:#62666d;">100</div>
<div class="t" style="left:1318.5px;top:1010.4px;font-size:21.00px;color:#62666d;">150</div>
<div class="t" style="left:1353.9px;top:952.7px;font-size:22.40px;color:#62666d;">Step</div>
<svg class="b" style="left:1491px;top:461px;" width="716" height="598" viewBox="1491 461 716 598"><path d="M1560.4 719 H2162" stroke="#ececee" stroke-width="2"/><path d="M1560.4 719 H1584.4" stroke="#e4e4e7" stroke-width="2.6"/><path d="M1560.4 785 H2162" stroke="#ececee" stroke-width="2"/><path d="M1560.4 785 H1584.4" stroke="#e4e4e7" stroke-width="2.6"/><path d="M1560.4 851 H2162" stroke="#ececee" stroke-width="2"/><path d="M1560.4 851 H1584.4" stroke="#e4e4e7" stroke-width="2.6"/><path d="M1560.4 917.5 H2162" stroke="#ececee" stroke-width="2"/><path d="M1560.4 917.5 H1584.4" stroke="#e4e4e7" stroke-width="2.6"/><path d="M1560.4 984 H2162" stroke="#ececee" stroke-width="2"/><path d="M1560.4 984 H1584.4" stroke="#e4e4e7" stroke-width="2.6"/><path d="M1572.4 718 V984" stroke="#e4e4e7" stroke-width="3.8"/><path d="M1572.4 984 H2162" stroke="#e4e4e7" stroke-width="4"/><path d="M1742 972 V996" stroke="#e4e4e7" stroke-width="2.6"/><path d="M1913 972 V996" stroke="#e4e4e7" stroke-width="2.6"/><path d="M2083.5 972 V996" stroke="#e4e4e7" stroke-width="2.6"/><path d="M1572.4 984 V996" stroke="#e4e4e7" stroke-width="2.6"/><polyline points="1572.4,851.0 1636.3,851.0" fill="none" stroke="#5b86d6" stroke-width="3" stroke-linejoin="round" stroke-dasharray="2.5 3.5" /><polyline points="1636.3,851.0 1704.3,851.0" fill="none" stroke="#e6b440" stroke-width="3" stroke-linejoin="round" /><polyline points="1636.3,851.0 1704.3,851.0" fill="none" stroke="#8c2a5a" stroke-width="3" stroke-linejoin="round" stroke-dasharray="12 8" /><polyline points="1704.3,851.0 2162.0,851.0" fill="none" stroke="#5a9a62" stroke-width="3.2" stroke-linejoin="round" stroke-dasharray="9 6" /><circle cx="1592.2" cy="851.0" r="6" fill="#d5544d"/><circle cx="1599.2" cy="851.0" r="6" fill="#e6b440"/><circle cx="1636.3" cy="851.0" r="6" fill="#a3a7ab"/><circle cx="1667.2" cy="851.0" r="6" fill="#e07c45"/><circle cx="1691.1" cy="851.0" r="6" fill="#e07c45"/><circle cx="1704.3" cy="851.0" r="6" fill="#8c2a5a"/><circle cx="2163.0" cy="851.0" r="6" fill="#5a9a62"/></svg>
<div class="t" style="left:1531.9px;top:708.4px;font-size:21.00px;color:#62666d;">2</div>
<div class="t" style="left:1531.9px;top:774.4px;font-size:21.00px;color:#62666d;">1</div>
<div class="t" style="left:1531.9px;top:840.4px;font-size:21.00px;color:#62666d;">0</div>
<div class="t" style="left:1524.9px;top:906.9px;font-size:21.00px;color:#62666d;">-1</div>
<div class="t" style="left:1524.9px;top:973.4px;font-size:21.00px;color:#62666d;">-2</div>
<div class="t" style="left:1566.6px;top:1010.4px;font-size:21.00px;color:#62666d;">0</div>
<div class="t" style="left:1730.3px;top:1010.4px;font-size:21.00px;color:#62666d;">50</div>
<div class="t" style="left:1895.5px;top:1010.4px;font-size:21.00px;color:#62666d;">100</div>
<div class="t" style="left:2066.0px;top:1010.4px;font-size:21.00px;color:#62666d;">150</div>
<div class="t" style="left:2103.9px;top:952.7px;font-size:22.40px;color:#62666d;">Step</div>
<svg class="b" style="left:2241px;top:461px;" width="716" height="598" viewBox="2241 461 716 598"><path d="M2334 719 H2912" stroke="#ececee" stroke-width="2"/><path d="M2334 719 H2358" stroke="#e4e4e7" stroke-width="2.6"/><path d="M2334 785 H2912" stroke="#ececee" stroke-width="2"/><path d="M2334 785 H2358" stroke="#e4e4e7" stroke-width="2.6"/><path d="M2334 851 H2912" stroke="#ececee" stroke-width="2"/><path d="M2334 851 H2358" stroke="#e4e4e7" stroke-width="2.6"/><path d="M2334 917 H2912" stroke="#ececee" stroke-width="2"/><path d="M2334 917 H2358" stroke="#e4e4e7" stroke-width="2.6"/><path d="M2334 984 H2912" stroke="#ececee" stroke-width="2"/><path d="M2334 984 H2358" stroke="#e4e4e7" stroke-width="2.6"/><path d="M2346 718 V984" stroke="#e4e4e7" stroke-width="3.8"/><path d="M2346 984 H2912" stroke="#e4e4e7" stroke-width="4"/><path d="M2509 972 V996" stroke="#e4e4e7" stroke-width="2.6"/><path d="M2673 972 V996" stroke="#e4e4e7" stroke-width="2.6"/><path d="M2836 972 V996" stroke="#e4e4e7" stroke-width="2.6"/><path d="M2346 984 V996" stroke="#e4e4e7" stroke-width="2.6"/><polyline points="2346.0,851.0 2407.7,851.0" fill="none" stroke="#5b86d6" stroke-width="3" stroke-linejoin="round" stroke-dasharray="2.5 3.5" /><polyline points="2407.7,851.0 2473.7,851.0" fill="none" stroke="#e6b440" stroke-width="3" stroke-linejoin="round" /><polyline points="2407.7,851.0 2473.7,851.0" fill="none" stroke="#8c2a5a" stroke-width="3" stroke-linejoin="round" stroke-dasharray="12 8" /><polyline points="2473.7,851.0 2912.0,851.0" fill="none" stroke="#5a9a62" stroke-width="3.2" stroke-linejoin="round" stroke-dasharray="9 6" /><circle cx="2365.7" cy="851.0" r="6" fill="#d5544d"/><circle cx="2371.9" cy="851.0" r="6" fill="#e6b440"/><circle cx="2407.7" cy="851.0" r="6" fill="#a3a7ab"/><circle cx="2437.8" cy="851.0" r="6" fill="#e07c45"/><circle cx="2460.5" cy="851.0" r="6" fill="#e07c45"/><circle cx="2473.7" cy="851.0" r="6" fill="#8c2a5a"/><circle cx="2913.0" cy="851.0" r="6" fill="#5a9a62"/></svg>
<div class="t" style="left:2275.0px;top:708.4px;font-size:21.00px;color:#62666d;">4e-5</div>
<div class="t" style="left:2275.0px;top:774.4px;font-size:21.00px;color:#62666d;">3e-5</div>
<div class="t" style="left:2275.0px;top:840.4px;font-size:21.00px;color:#62666d;">2e-5</div>
<div class="t" style="left:2275.0px;top:906.4px;font-size:21.00px;color:#62666d;">1e-5</div>
<div class="t" style="left:2305.3px;top:973.4px;font-size:21.00px;color:#62666d;">0</div>
<div class="t" style="left:2340.2px;top:1010.4px;font-size:21.00px;color:#62666d;">0</div>
<div class="t" style="left:2497.3px;top:1010.4px;font-size:21.00px;color:#62666d;">50</div>
<div class="t" style="left:2655.5px;top:1010.4px;font-size:21.00px;color:#62666d;">100</div>
<div class="t" style="left:2818.5px;top:1010.4px;font-size:21.00px;color:#62666d;">150</div>
<div class="t" style="left:2853.9px;top:952.7px;font-size:22.40px;color:#62666d;">Step</div>
<svg class="b" style="left:740px;top:1306px;" width="2300" height="20" viewBox="740 1306 2300 20"><path d="M864 1316 h15" stroke="#8c2a5a" stroke-width="4.2" stroke-linecap="round"/><path d="M1116 1316 h15" stroke="#a6c66a" stroke-width="4.2" stroke-linecap="round"/></svg>
<div class="t" style="left:894.0px;top:1304.8px;font-size:23.25px;color:#8e2f5e;">empathic-picard-15</div>
<div class="t" style="left:1147.0px;top:1305.2px;font-size:22.43px;color:#6b8a35;">nemesis-phaser-13</div>
<svg class="b" style="left:740px;top:1334px;" width="2300" height="20" viewBox="740 1334 2300 20"><path d="M785.7 1344 h15" stroke="#e9b496" stroke-width="4.2" stroke-linecap="round"/><path d="M963.6 1344 h15" stroke="#3f8a7a" stroke-width="4.2" stroke-linecap="round"/><path d="M1181 1344 h15" stroke="#62bedb" stroke-width="4.2" stroke-linecap="round"/></svg>
<div class="t" style="left:816.0px;top:1333.2px;font-size:22.54px;color:#b8693a;">rosy-lake-12</div>
<div class="t" style="left:994.0px;top:1332.6px;font-size:23.63px;color:#3f8a7a;">electric-wind-11</div>
<div class="t" style="left:1211.5px;top:1333.0px;font-size:22.90px;color:#4aa3c9;">earnest-snowball-10</div>
<svg class="b" style="left:740px;top:1362px;" width="2300" height="20" viewBox="740 1362 2300 20"><path d="M899.8 1372 h15" stroke="#c268cf" stroke-width="4.2" stroke-linecap="round"/><path d="M1121 1372 h15" stroke="#5b86d6" stroke-width="4.2" stroke-linecap="round"/></svg>
<div class="t" style="left:930.7px;top:1360.6px;font-size:23.60px;color:#b551c2;">glamorous-hill-8</div>
<div class="t" style="left:1151.6px;top:1360.7px;font-size:23.49px;color:#4a76cc;">stilted-music-1</div>
<svg class="b" style="left:740px;top:1306px;" width="2300" height="20" viewBox="740 1306 2300 20"><path d="M1614 1316 h15" stroke="#8c2a5a" stroke-width="4.2" stroke-linecap="round"/><path d="M1866 1316 h15" stroke="#a6c66a" stroke-width="4.2" stroke-linecap="round"/></svg>
<div class="t" style="left:1644.0px;top:1304.8px;font-size:23.25px;color:#8e2f5e;">empathic-picard-15</div>
<div class="t" style="left:1897.0px;top:1305.2px;font-size:22.43px;color:#6b8a35;">nemesis-phaser-13</div>
<svg class="b" style="left:740px;top:1334px;" width="2300" height="20" viewBox="740 1334 2300 20"><path d="M1535.7 1344 h15" stroke="#e9b496" stroke-width="4.2" stroke-linecap="round"/><path d="M1713.6 1344 h15" stroke="#3f8a7a" stroke-width="4.2" stroke-linecap="round"/><path d="M1931 1344 h15" stroke="#62bedb" stroke-width="4.2" stroke-linecap="round"/></svg>
<div class="t" style="left:1566.0px;top:1333.2px;font-size:22.54px;color:#b8693a;">rosy-lake-12</div>
<div class="t" style="left:1744.0px;top:1332.6px;font-size:23.63px;color:#3f8a7a;">electric-wind-11</div>
<div class="t" style="left:1961.5px;top:1333.0px;font-size:22.90px;color:#4aa3c9;">earnest-snowball-10</div>
<svg class="b" style="left:740px;top:1362px;" width="2300" height="20" viewBox="740 1362 2300 20"><path d="M1649.8 1372 h15" stroke="#c268cf" stroke-width="4.2" stroke-linecap="round"/><path d="M1871 1372 h15" stroke="#5b86d6" stroke-width="4.2" stroke-linecap="round"/></svg>
<div class="t" style="left:1680.7px;top:1360.6px;font-size:23.60px;color:#b551c2;">glamorous-hill-8</div>
<div class="t" style="left:1901.6px;top:1360.7px;font-size:23.49px;color:#4a76cc;">stilted-music-1</div>
<div class="t" style="left:959.9px;top:1265.6px;font-size:26.60px;color:#2e3238;-webkit-text-stroke:0.88px #2e3238;">Process GPU Temp (℃)</div>
<div class="t" style="left:1683.3px;top:1265.7px;font-size:26.50px;color:#2e3238;-webkit-text-stroke:0.87px #2e3238;">Process GPU Utilization (%)</div>
<div class="t" style="left:2468.3px;top:1266.3px;font-size:25.30px;color:#2e3238;-webkit-text-stroke:0.83px #2e3238;">GPU Power Usage (W)</div>
<div class="t" style="left:2484.2px;top:1302.6px;font-size:24.60px;color:#8f8f8f;">Showing first 30 runs</div>
<svg class="b" style="left:740px;top:1333px;" width="2300" height="20" viewBox="740 1333 2300 20"><path d="M2299 1343 h15" stroke="#98ccbd" stroke-width="4.2" stroke-linecap="round"/><path d="M2475 1343 h15" stroke="#e58aa5" stroke-width="4.2" stroke-linecap="round"/><path d="M2710.6 1343 h15" stroke="#7a55b0" stroke-width="4.2" stroke-linecap="round"/></svg>
<div class="t" style="left:2329.6px;top:1332.4px;font-size:21.98px;color:#5fa693;">sage-sun-87</div>
<div class="t" style="left:2505.0px;top:1332.1px;font-size:22.62px;color:#c94d72;">snowy-cosmos-85</div>
<div class="t" style="left:2741.0px;top:1331.8px;font-size:23.27px;color:#7a55b0;">good-puddle-84</div>
<svg class="b" style="left:740px;top:1362px;" width="2300" height="20" viewBox="740 1362 2300 20"><path d="M2374.7 1372 h15" stroke="#9a6a52" stroke-width="4.2" stroke-linecap="round"/><path d="M2605 1372 h15" stroke="#a6c66a" stroke-width="4.2" stroke-linecap="round"/></svg>
<div class="t" style="left:2405.0px;top:1360.9px;font-size:22.97px;color:#9a6a52;">prime-cosmos-78</div>
<div class="t" style="left:2635.5px;top:1361.0px;font-size:22.87px;color:#6b8a35;">dauntless-salad-77</div>
<svg class="b" style="left:740px;top:1390px;" width="2300" height="20" viewBox="740 1390 2300 20"><path d="M2378 1400 h15" stroke="#3b857a" stroke-width="4.2" stroke-linecap="round"/><path d="M2592.7 1400 h15" stroke="#62bedb" stroke-width="4.2" stroke-linecap="round"/></svg>
<div class="t" style="left:2408.5px;top:1388.8px;font-size:23.25px;color:#3b857a;">robust-cloud-75</div>
<div class="t" style="left:2623.0px;top:1388.7px;font-size:23.50px;color:#4aa3c9;">gentle-mountain-74</div>
<svg class="b" style="left:740px;top:1418px;" width="2300" height="20" viewBox="740 1418 2300 20"><path d="M2288.6 1428 h15" stroke="#e6b440" stroke-width="4.2" stroke-linecap="round"/><path d="M2493 1428 h15" stroke="#c268cf" stroke-width="4.2" stroke-linecap="round"/><path d="M2730.5 1428 h6 M2741.5 1428 h6" stroke="#98ccbd" stroke-width="4.2" stroke-linecap="round"/></svg>
<div class="t" style="left:2319.0px;top:1417.3px;font-size:22.26px;color:#d99a30;">eager-glade-73</div>
<div class="t" style="left:2523.0px;top:1416.7px;font-size:23.44px;color:#b551c2;">autumn-cherry-72</div>
<div class="t" style="left:2761.7px;top:1416.9px;font-size:23.03px;color:#5fa693;">desert-wind-71</div>
<svg class="b" style="left:741px;top:1207px;" width="716" height="515" viewBox="741 1207 716 515"><path d="M814 1476 H1412" stroke="#ececee" stroke-width="2"/><path d="M814 1476 H838" stroke="#e4e4e7" stroke-width="2.6"/><path d="M814 1560 H1412" stroke="#ececee" stroke-width="2"/><path d="M814 1560 H838" stroke="#e4e4e7" stroke-width="2.6"/><path d="M814 1645 H1412" stroke="#ececee" stroke-width="2"/><path d="M814 1645 H838" stroke="#e4e4e7" stroke-width="2.6"/><path d="M826 1404 V1722" stroke="#e4e4e7" stroke-width="3.8"/><path d="M1006 1716 V1732" stroke="#e4e4e7" stroke-width="2.6"/><path d="M1191 1716 V1732" stroke="#e4e4e7" stroke-width="2.6"/><path d="M1375 1716 V1732" stroke="#e4e4e7" stroke-width="2.6"/><polyline points="826.1,1587.2 826.8,1558.6 829.6,1533.5" fill="none" stroke="#e9b496" stroke-width="2.4" stroke-linejoin="round" /><polyline points="826.1,1558.6 831.4,1472.5 836.8,1418.7 842.2,1407.2 854.7,1404.4" fill="none" stroke="#c268cf" stroke-width="3" stroke-linejoin="round" /><polyline points="826.1,1511.9 832.5,1535.2" fill="none" stroke="#62bedb" stroke-width="2.6" stroke-linejoin="round" /><polyline points="826.1,1572.9 829.6,1558.6 835.0,1553.2 840.4,1551.4 845.8,1547.1 937.2,1547.1 982.4,1547.8" fill="none" stroke="#3f8a7a" stroke-width="3.2" stroke-linejoin="round" /><polyline points="826.1,1558.6 827.8,1504.8 831.4,1451.0 836.8,1415.1 842.2,1406.5 847.6,1405.1 847.6,1404.3 849.1,1405.2 850.6,1404.7 852.1,1405.4 853.7,1405.5 855.2,1403.8 856.7,1403.7 858.2,1406.1 859.8,1404.4 861.3,1404.3 862.8,1406.5 864.3,1405.0 865.9,1406.1 867.4,1405.0 868.9,1405.5 870.4,1404.1 871.9,1405.5 873.5,1406.1 875.0,1405.2 876.5,1405.8 878.0,1405.6 879.6,1403.8 881.1,1405.8 882.6,1405.4 884.1,1404.5 885.7,1403.7 887.2,1406.1 888.7,1405.0 890.2,1405.7 891.8,1406.2 893.3,1405.7 894.8,1406.3 896.3,1404.8 897.9,1406.0 899.4,1404.9 900.9,1406.3 902.4,1406.2 903.9,1403.9 905.5,1404.0 907.0,1404.3 908.5,1405.1 911.4,1415.1 914.3,1451.0 917.5,1486.8 921.1,1511.9 926.4,1531.7 931.8,1542.4 937.2,1547.1 1411.6,1547.8" fill="none" stroke="#5b86d6" stroke-width="3.2" stroke-linejoin="round" /><circle cx="854.7" cy="1404.4" r="6" fill="#c268cf"/><circle cx="832.5" cy="1535.2" r="6" fill="#62bedb"/><circle cx="829.3" cy="1546.0" r="6" fill="#a6c66a"/><circle cx="826.1" cy="1563.9" r="6" fill="#e9b496"/><circle cx="982.4" cy="1547.8" r="6.5" fill="#3f8a7a"/><circle cx="1411.6" cy="1547.8" r="6.5" fill="#5b86d6"/></svg>
<div class="t" style="left:773.6px;top:1465.4px;font-size:21.00px;color:#62666d;">60</div>
<div class="t" style="left:773.6px;top:1549.4px;font-size:21.00px;color:#62666d;">40</div>
<div class="t" style="left:773.6px;top:1634.4px;font-size:21.00px;color:#62666d;">20</div>
<div class="t" style="left:1249.5px;top:1697.7px;font-size:22.40px;color:#62666d;">Time (minutes)</div>
<svg class="b" style="left:1491px;top:1207px;" width="716" height="515" viewBox="1491 1207 716 515"><path d="M1575.5 1405 H2162" stroke="#ececee" stroke-width="2"/><path d="M1575.5 1405 H1599.5" stroke="#e4e4e7" stroke-width="2.6"/><path d="M1575.5 1470 H2162" stroke="#ececee" stroke-width="2"/><path d="M1575.5 1470 H1599.5" stroke="#e4e4e7" stroke-width="2.6"/><path d="M1575.5 1534.5 H2162" stroke="#ececee" stroke-width="2"/><path d="M1575.5 1534.5 H1599.5" stroke="#e4e4e7" stroke-width="2.6"/><path d="M1575.5 1599 H2162" stroke="#ececee" stroke-width="2"/><path d="M1575.5 1599 H1599.5" stroke="#e4e4e7" stroke-width="2.6"/><path d="M1575.5 1665 H2162" stroke="#ececee" stroke-width="2"/><path d="M1575.5 1665 H1599.5" stroke="#e4e4e7" stroke-width="2.6"/><path d="M1587.5 1404 V1722" stroke="#e4e4e7" stroke-width="3.8"/><path d="M1765 1716 V1732" stroke="#e4e4e7" stroke-width="2.6"/><path d="M1945 1716 V1732" stroke="#e4e4e7" stroke-width="2.6"/><path d="M2130 1716 V1732" stroke="#e4e4e7" stroke-width="2.6"/><polyline points="1588.6,1483.3 1589.0,1503.0" fill="none" stroke="#e58a6a" stroke-width="2.4" stroke-linejoin="round" /><polyline points="1588.6,1483.3 1588.6,1405.1 1595.8,1405.1 1597.6,1415.1 1601.2,1406.2 1626.2,1406.2 1629.1,1413.3 1631.6,1405.1 1644.2,1406.2 1647.8,1416.9 1651.3,1406.2 1654.2,1415.1 1656.7,1405.1 1669.3,1405.1 1673.6,1737.8" fill="none" stroke="#5b86d6" stroke-width="3.2" stroke-linejoin="round" /><circle cx="1616.2" cy="1405.1" r="6" fill="#c268cf"/><circle cx="1586.8" cy="1424.8" r="6" fill="#e9b496"/><circle cx="1591.5" cy="1424.8" r="6" fill="#a6c66a"/></svg>
<div class="t" style="left:1524.0px;top:1394.4px;font-size:21.00px;color:#62666d;">100</div>
<div class="t" style="left:1535.6px;top:1459.4px;font-size:21.00px;color:#62666d;">80</div>
<div class="t" style="left:1535.6px;top:1523.9px;font-size:21.00px;color:#62666d;">60</div>
<div class="t" style="left:1535.6px;top:1588.4px;font-size:21.00px;color:#62666d;">40</div>
<div class="t" style="left:1535.6px;top:1654.4px;font-size:21.00px;color:#62666d;">20</div>
<div class="t" style="left:1999.5px;top:1697.7px;font-size:22.40px;color:#62666d;">Time (minutes)</div>
<svg class="b" style="left:2241px;top:1207px;" width="716" height="515" viewBox="2241 1207 716 515"><path d="M2314 1464.6 H2912" stroke="#ececee" stroke-width="2"/><path d="M2314 1464.6 H2338" stroke="#e4e4e7" stroke-width="2.6"/><path d="M2314 1517.7 H2912" stroke="#ececee" stroke-width="2"/><path d="M2314 1517.7 H2338" stroke="#e4e4e7" stroke-width="2.6"/><path d="M2314 1570.8 H2912" stroke="#ececee" stroke-width="2"/><path d="M2314 1570.8 H2338" stroke="#e4e4e7" stroke-width="2.6"/><path d="M2314 1623.9 H2912" stroke="#ececee" stroke-width="2"/><path d="M2314 1623.9 H2338" stroke="#e4e4e7" stroke-width="2.6"/><path d="M2314 1677 H2912" stroke="#ececee" stroke-width="2"/><path d="M2314 1677 H2338" stroke="#e4e4e7" stroke-width="2.6"/><path d="M2326 1464 V1722" stroke="#e4e4e7" stroke-width="3.8"/><path d="M2465 1716 V1732" stroke="#e4e4e7" stroke-width="2.6"/><path d="M2628 1716 V1732" stroke="#e4e4e7" stroke-width="2.6"/><path d="M2792 1716 V1732" stroke="#e4e4e7" stroke-width="2.6"/><circle cx="2330.4" cy="1479.0" r="5.4" fill="#98ccbd"/><circle cx="2336.1" cy="1500.5" r="5.4" fill="#a6c66a"/><circle cx="2335.4" cy="1509.1" r="5.4" fill="#e9b496"/><circle cx="2387.7" cy="1506.6" r="5.4" fill="#a3a7ab"/><circle cx="2419.6" cy="1499.4" r="5.4" fill="#62bedb"/><circle cx="2519.7" cy="1498.3" r="5.4" fill="#e6b440"/><circle cx="2527.6" cy="1463.9" r="5.4" fill="#d5544d"/><circle cx="2327.1" cy="1535.2" r="5.4" fill="#e58aa5"/><circle cx="2326.1" cy="1552.5" r="5.4" fill="#c268cf"/><circle cx="2329.6" cy="1567.5" r="5.4" fill="#d5544d"/><circle cx="2327.1" cy="1572.9" r="5.4" fill="#e6b440"/><circle cx="2325.3" cy="1579.3" r="5.4" fill="#9a6a52"/><circle cx="2372.7" cy="1572.9" r="5.4" fill="#e6b440"/><circle cx="2418.6" cy="1532.0" r="5.4" fill="#5a9a62"/><circle cx="2398.8" cy="1553.2" r="5.4" fill="#7a55b0"/><circle cx="2446.9" cy="1535.2" r="5.4" fill="#e07c45"/><circle cx="2446.9" cy="1539.9" r="5.4" fill="#a6c66a"/><circle cx="2455.8" cy="1540.6" r="5.4" fill="#3b857a"/><circle cx="2455.8" cy="1542.4" r="5.4" fill="#98ccbd"/><circle cx="2479.5" cy="1545.3" r="5.4" fill="#e58aa5"/><circle cx="2483.8" cy="1544.9" r="5.4" fill="#98ccbd"/><circle cx="2327.1" cy="1601.6" r="5.4" fill="#5a9a62"/><circle cx="2326.1" cy="1605.2" r="5.4" fill="#5b86d6"/><circle cx="2327.8" cy="1604.4" r="5.4" fill="#7a55b0"/><circle cx="2326.8" cy="1615.2" r="5.4" fill="#7a55b0"/><circle cx="2330.4" cy="1638.1" r="5.4" fill="#a3a7ab"/><circle cx="2330.7" cy="1641.7" r="5.4" fill="#5b86d6"/><circle cx="2327.8" cy="1652.5" r="5.4" fill="#a6c66a"/><circle cx="2446.9" cy="1612.3" r="5.4" fill="#8c2a5a"/><polyline points="2797.5,1566.8 2911.6,1567.5" fill="none" stroke="#5a9a62" stroke-width="3.2" stroke-linejoin="round" stroke-dasharray="9 6" /><circle cx="2911.6" cy="1567.5" r="6.5" fill="#5a9a62"/></svg>
<div class="t" style="left:2273.6px;top:1454.0px;font-size:21.00px;color:#62666d;">10</div>
<div class="t" style="left:2285.3px;top:1507.1px;font-size:21.00px;color:#62666d;">8</div>
<div class="t" style="left:2285.3px;top:1560.2px;font-size:21.00px;color:#62666d;">6</div>
<div class="t" style="left:2285.3px;top:1613.3px;font-size:21.00px;color:#62666d;">4</div>
<div class="t" style="left:2285.3px;top:1666.4px;font-size:21.00px;color:#62666d;">2</div>
<div class="t" style="left:2744.5px;top:1697.7px;font-size:22.40px;color:#62666d;">Time (seconds)</div>
</div><script>(function(){var w=window.innerWidth;if(w&&Math.abs(w-3024)>2){var a=document.getElementById("app");a.style.transformOrigin="0 0";a.style.transform="scale("+(w/3024)+")";document.documentElement.style.overflow="hidden";}})();</script></body></html>
